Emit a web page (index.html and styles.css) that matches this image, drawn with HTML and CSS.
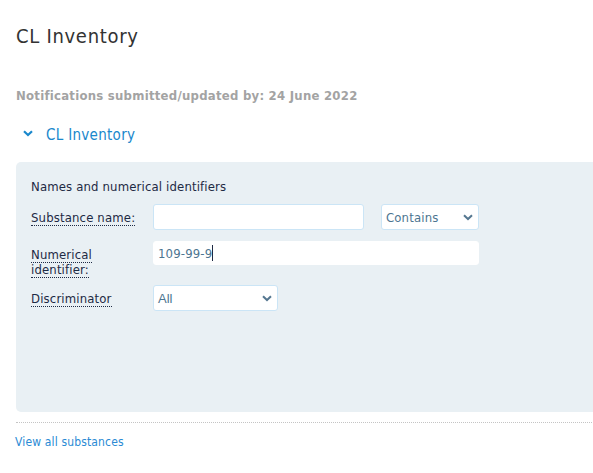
FILE: index.html
```html
<!DOCTYPE html>
<html lang="en">
<head>
    <meta charset="UTF-8">
    <title>CL Inventory</title>
    <link rel="stylesheet" href="styles.css">
</head>
<body>
    <div class="page">
        <h1 class="page-title">CL Inventory</h1>
        <p class="updated">Notifications submitted/updated by: 24 June 2022</p>

        <div class="accordion-head">
            <svg class="chevron" width="10" height="7" viewBox="0 0 10 7">
                <path d="M1 1.2 L5 5 L9 1.2" fill="none" stroke="#1a88cc" stroke-width="2.2"/>
            </svg>
            <a href="#" class="accordion-link">CL Inventory</a>
        </div>

        <div class="search-panel">
            <div class="panel-heading">Names and numerical identifiers</div>

            <div class="form-row">
                <label class="field-label"><span>Substance name:</span></label>
                <input type="text" class="text-field name-field">
                <div class="select-box match-box">
                    <span>Contains</span>
                    <svg class="select-arrow" width="10" height="7" viewBox="0 0 10 7">
                        <path d="M1 1.2 L5 5 L9 1.2" fill="none" stroke="#557790" stroke-width="2"/>
                    </svg>
                </div>
            </div>

            <div class="form-row id-row">
                <label class="field-label"><span>Numerical identifier:</span></label>
                <div class="text-field number-field">109-99-9<span class="caret"></span></div>
            </div>

            <div class="form-row">
                <label class="field-label"><span>Discriminator</span></label>
                <div class="select-box disc-box">
                    <span class="all">All</span>
                    <svg class="select-arrow" width="10" height="7" viewBox="0 0 10 7">
                        <path d="M1 1.2 L5 5 L9 1.2" fill="none" stroke="#557790" stroke-width="2"/>
                    </svg>
                </div>
            </div>
        </div>

        <div class="divider"></div>
        <a href="#" class="view-all">View all substances</a>
    </div>
</body>
</html>
```

FILE: styles.css
```css
* {
    margin: 0;
    padding: 0;
    box-sizing: border-box;
}
html, body {
    overflow: hidden;
}
body {
    font-family: 'DejaVu Sans Condensed', 'DejaVu Sans', sans-serif;
    font-size: 13px;
    letter-spacing: 0.15px;
    color: #333;
    background: #fff;
}
.page {
    width: 640px;
    padding: 0 0 0 16px;
}
.page-title {
    font-size: 20px;
    font-weight: normal;
    letter-spacing: 0.7px;
    color: #333;
    line-height: 24px;
    padding-top: 24px;
}
.updated {
    margin-top: 40px;
    font-weight: bold;
    letter-spacing: 0.25px;
    color: #a3a3a3;
    line-height: 16px;
}
.accordion-head {
    display: flex;
    align-items: center;
    margin-top: 21px;
    padding-left: 7px;
    height: 20px;
}
.chevron {
    margin-right: 13px;
    margin-top: -4px;
}
.accordion-link {
    font-size: 15px;
    letter-spacing: 0.3px;
    color: #1a88cc;
    text-decoration: none;
}
.search-panel {
    margin-top: 17px;
    background: #e9f0f4;
    border-radius: 5px 0 0 5px;
    min-height: 250px;
    padding: 16px 15px 0 15px;
}
.panel-heading {
    color: #1e2a44;
    line-height: 17px;
    margin-bottom: 9px;
}
.form-row {
    display: flex;
    align-items: flex-start;
    margin-bottom: 11px;
}
.id-row {
    margin-bottom: 8px;
}
.field-label {
    width: 122px;
    flex: none;
    padding-top: 6px;
    padding-right: 10px;
    line-height: 15px;
    color: #1e2a44;
}
.field-label span {
    border-bottom: 1px dotted #1e2a44;
}
.text-field {
    background: #fff;
    border: 1px solid #cbe5f6;
    border-radius: 3px;
    height: 26px;
    font: inherit;
    color: #4d7591;
    outline: none;
}
.name-field {
    width: 211px;
}
.number-field {
    width: 326px;
    height: 24px;
    border-color: #fff;
    padding: 3px 4px 0 4px;
    line-height: 17px;
}
.caret {
    display: inline-block;
    width: 1px;
    height: 16px;
    background: #1e2a44;
    vertical-align: -3px;
}
.select-box {
    display: flex;
    align-items: center;
    justify-content: space-between;
    background: #fff;
    border: 1px solid #cbe5f6;
    border-radius: 3px;
    height: 26px;
    padding: 0 5px 0 4px;
    color: #4d7591;
}
.match-box {
    width: 98px;
    margin-left: 17px;
}
.disc-box {
    width: 125px;
}
.all {
    font-family: 'Liberation Sans', Arial, sans-serif;
    font-size: 13px;
    letter-spacing: 0;
}
.divider {
    margin-top: 10px;
    border-top: 1px dotted #c4c4c4;
}
.view-all {
    display: inline-block;
    margin-top: 12px;
    margin-left: -1px;
    font-size: 12px;
    color: #2a8ad4;
    text-decoration: none;
}
```
